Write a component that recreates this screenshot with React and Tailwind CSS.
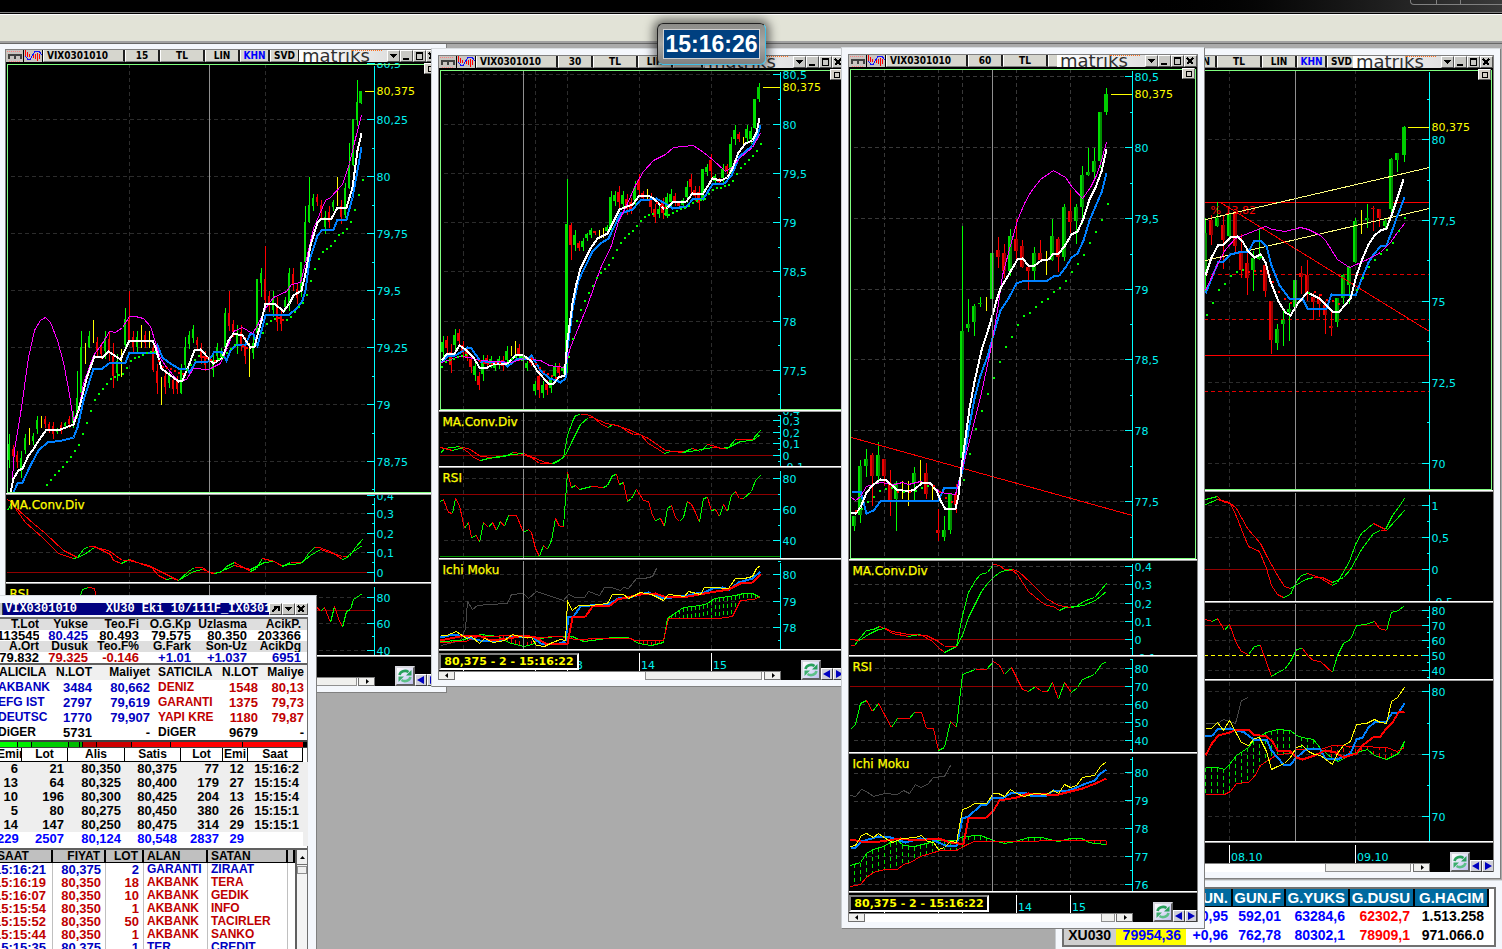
import React from 'react';

const CYAN = '#00f0f0';

const parse = (str) => str.trim().split(/\s+/).map((p) => p.split(',').map(Number));

// y value of a polyline at a given x
const valueAt = (pts, x) => {
  for (let i = 1; i < pts.length; i++) {
    const [x0, y0] = pts[i - 1];
    const [x1, y1] = pts[i];
    if (x >= x0 && x <= x1) return y0 + ((y1 - y0) * (x - x0)) / (x1 - x0 || 1);
  }
  return null;
};

const Line = ({ pts, color, w = 1, dash }) => (
  <polyline points={pts} fill="none" stroke={color} strokeWidth={w} strokeDasharray={dash} />
);

// rising parts are green, falling parts are red
const Trend = ({ pts }) => {
  const p = parse(pts);
  return p.slice(1).map(([x, y], i) => (
    <line key={i} x1={p[i][0]} y1={p[i][1]} x2={x} y2={y} stroke={y < p[i][1] ? '#00ff00' : '#ff0000'} />
  ));
};

const Cloud = ({ a, b, step, start }) => {
  const top = parse(a);
  const bottom = parse(b);
  const bars = [];
  for (let x = start; x <= top[top.length - 1][0]; x += step) {
    const ya = valueAt(top, x);
    const yb = valueAt(bottom, x);
    if (ya !== null && yb !== null) bars.push([x, ya, yb]);
  }
  return (
    <>
      {bars.map(([x, ya, yb]) => (
        <line key={x} x1={x} x2={x} y1={ya} y2={yb} stroke={ya < yb ? '#00e000' : '#ff0000'} strokeDasharray="4 3" />
      ))}
      <Line pts={a} color="#00ff00" />
      <Line pts={b} color="#ff0000" />
    </>
  );
};

// each candle: colour letter, x, high, low and, where known, body top and bottom
const Candles = ({ data, body = 2 }) =>
  data.trim().split(/\s+/).map((item, i) => {
    const kind = item[0];
    const [x, high, low, bt, bb] = item.slice(1).split(',').map(Number);
    const color = kind === 'r' ? '#ff0000' : kind === 'y' ? '#ffff00' : '#00ff00';
    const range = low - high;
    const t = bt === undefined ? high + Math.round(range * 0.3) : bt;
    const b = bb === undefined ? high + Math.round(range * 0.75) : bb;
    const height = Math.max(b - t, 1);
    return (
      <g key={i}>
        <line x1={x} x2={x} y1={high} y2={low} stroke={color} />
        {kind === 'G' && <rect x={x - 2.5} y={t - 0.5} width={Math.max(body, 3)} height={height} fill="#00cc00" />}
        {(kind === 'g' || kind === 'r') && (
          <>
            <rect x={x - (body > 2 ? 2.5 : 1.5)} y={t - 0.5} width={body} height={height} fill={kind === 'g' ? '#00e000' : '#ee0000'} />
            {body > 3 && <rect x={x - 0.5} y={t - 0.5} width={2} height={height} fill={kind === 'g' ? '#009000' : '#990000'} />}
          </>
        )}
      </g>
    );
  });

const Dots = ({ pts, color = '#00ff00' }) =>
  parse(pts).map(([x, y], i) => <rect key={i} x={x - 0.5} y={y - 1.5} width="2" height="2" fill={color} />);

const Pane = ({ win, y, h, title, grid = [], labels = [], ticks = [], last, frame, children }) => (
  <div className="relative border-b border-[#a0a0a0]">
    <svg
      width="100%"
      height={h}
      className="block bg-black border-b border-white box-content"
      shapeRendering="crispEdges"
      fontFamily='"DejaVu Sans", Verdana, sans-serif'
      fontSize="11"
    >
      <g transform={`translate(${0.5 - win.x} ${0.5 - y})`}>
        {grid.map((gy) => (
          <line key={gy} x1={win.x + 4} x2={win.axis} y1={gy} y2={gy} stroke={win.gridColor} strokeDasharray="4 3" />
        ))}
        {win.gridX.map((gx) => (
          <line key={gx} x1={gx} x2={gx} y1={y} y2={y + h} stroke={win.gridColor} strokeDasharray="4 3" />
        ))}
        {children}
        <line x1={win.cross} x2={win.cross} y1={y} y2={y + h} stroke="#909090" />
        <line x1={win.axis} x2={win.axis} y1={y + 2} y2={y + h} stroke="#00ffff" />
        {labels.map(([ly, text]) => (
          <g key={text}>
            <line x1={win.axis - 8} x2={win.axis} y1={ly} y2={ly} stroke="#00ffff" />
            <text x={win.axis + 2} y={ly + 4} fill={CYAN}>{text}</text>
          </g>
        ))}
        {ticks.map((ty) => (
          <line key={ty} x1={win.axis - 3} x2={win.axis} y1={ty} y2={ty} stroke="#00ffff" />
        ))}
        {last && (
          <>
            <line x1={last[0]} x2={win.axis - 1} y1={last[1]} y2={last[1]} stroke="#ffff00" />
            <text x={win.axis + 2} y={last[1] + 3} fill="#ffff00">80,375</text>
          </>
        )}
        {title && <text x={win.x + 3} y={y + 13} fill="#ffff00" stroke="#ffff00" strokeWidth="0.25" fontSize="12">{title}</text>}
      </g>
      {frame && <rect x="1.5" y="1.5" height={h - 2} className="w-[calc(100%-3px)]" fill="none" stroke="#80ff80" />}
    </svg>
    {frame && (
      <button aria-label="Maximize pane" className="absolute top-0 right-[2px] w-[13px] h-[11px] bg-[#d4d0c8] border border-t-white border-l-white border-r-[#606060] border-b-[#606060] flex items-center justify-center">
        <span className="block w-[6px] h-[6px] border border-black"></span>
      </button>
    )}
  </div>
);

const Cell = ({ children, className }) => (
  <button className={`shrink-0 h-[12px] bg-[#d6d6ce] border-l border-l-white border-r-2 border-r-[#202020] border-b border-b-[#808080] leading-[12px] whitespace-nowrap ${className}`}>
    {children}
  </button>
);

const MIcon = () => (
  <svg width="18" height="12" className="block shrink-0 bg-[#c8c4c0]" shapeRendering="crispEdges">
    <path d="M2.5 9V4.5H14.5V9M8.5 4.5V9" fill="none" stroke="#404040" strokeWidth="2" />
    <path d="M1 1.5H15M3 11.5H15" stroke="#ff8080" strokeDasharray="1 1" />
    <path d="M17.5 0V12" stroke="#000" />
  </svg>
);

const WaveIcon = () => (
  <svg width="19" height="12" className="block shrink-0 bg-[#c8c4c0]" shapeRendering="crispEdges">
    <path d="M1.5 0V6M3.5 2V7M5.5 4V7M9.5 5V8M11.5 4V9M13.5 3V11M15.5 4V9" stroke="#ff0000" />
    <path d="M1.5 6L3.5 9H6.5L10.5 2L13 1H15L17.5 5" fill="none" stroke="#1010ff" />
    <path d="M18.5 0V12" stroke="#000" />
  </svg>
);

const CapButton = ({ label, children }) => (
  <button aria-label={label} className="shrink-0 w-[13px] h-[12px] bg-[#c8c8c4] border border-t-white border-l-white border-r-[#505050] border-b-[#505050] flex items-center justify-center">
    <svg width="9" height="8" className="block" shapeRendering="crispEdges">{children}</svg>
  </button>
);

const TitleBar = ({ period }) => (
  <div className="flex h-[13px] border-b border-black bg-[#d6d6ce] font-bold text-[10px] text-black font-['DejaVu_Sans_Condensed','DejaVu_Sans',Tahoma,sans-serif]">
    <div className="flex flex-1 min-w-0 overflow-hidden">
      <MIcon />
      <WaveIcon />
      <Cell className="w-[82px] text-left pl-[3px]">VIX0301010</Cell>
      <Cell className="w-[35px]">{period}</Cell>
      <Cell className="w-[45px]">TL</Cell>
      <Cell className="w-[35px]">LIN</Cell>
      <Cell className="w-[30px] text-[#0000ff]">KHN</Cell>
      <Cell className="w-[30px]">SVD</Cell>
    </div>
    <div className="relative w-[88px] h-[12px] shrink-0 bg-gradient-to-r from-white to-[#e0e0e0] overflow-hidden pl-[3px]">
      <span className="block font-['DejaVu_Sans',sans-serif] font-normal text-[18px] leading-[11px] text-[#303030]">matriks</span>
      <span className="absolute top-0 left-[53px] w-[30px] border-t border-dotted border-[#ff7020]"></span>
    </div>
    <CapButton label="Menu"><path d="M1 2H8L4.5 6Z" fill="#000" /></CapButton>
    <CapButton label="Minimize"><path d="M1 7H7" stroke="#000" strokeWidth="2" /></CapButton>
    <CapButton label="Maximize"><path d="M1.5 1V7.5H7.5V1" fill="none" stroke="#000" /><path d="M1 1H8" stroke="#000" strokeWidth="2" /></CapButton>
    <CapButton label="Close"><path d="M1 1L7 7M7 1L1 7" stroke="#000" strokeWidth="1.5" /></CapButton>
  </div>
);

const RefreshIcon = () => (
  <svg width="16" height="16" viewBox="0 0 16 16" className="block">
    <path d="M2.5 7A5.6 5 0 0 1 11.5 4" fill="none" stroke="#27a05a" strokeWidth="2.6" />
    <path d="M14.5 2V7.5H9Z" fill="#27a05a" />
    <path d="M13.5 9A5.6 5 0 0 1 4.5 12" fill="none" stroke="#5cc088" strokeWidth="2.6" />
    <path d="M1.5 14V8.5H7Z" fill="#3bad6c" />
  </svg>
);

const arrowButton = 'w-[12px] h-[12px] bg-[#d0d0d8] border border-t-white border-l-white border-r-[#404040] border-b-[#404040] flex items-center justify-center';

const Footer = ({ win, marks, thumb }) => (
  <div className="flex h-[29px] bg-black">
    <div className="relative shrink-0 flex flex-col" style={{ width: win.axis - win.x + 1 }}>
      <svg width="100%" height="20" className="block" fontFamily='"DejaVu Sans", Verdana, sans-serif' fontSize="11" shapeRendering="crispEdges">
        {marks.map(([x, text]) => (
          <g key={x}>
            <line x1={x - win.x + 0.5} x2={x - win.x + 0.5} y1="2" y2="20" stroke="#fff" />
            <text x={x - win.x + 2} y="18" fill={CYAN}>{text}</text>
          </g>
        ))}
      </svg>
      <div className="h-[9px] flex bg-white border-t border-[#808080]">
        <button aria-label="Scroll left" className="w-[16px] bg-[#f0f0ee] border-r border-b border-[#707070] flex items-center justify-center">
          <svg width="4" height="5"><path d="M3 0V5L0 2.5Z" fill="#000" /></svg>
        </button>
        <div className="flex-1 flex">
          <div style={{ width: thumb[0] - win.x - 16 }}></div>
          <div className="bg-[#f0f0ee] border-r border-b border-l border-[#909090]" style={{ width: thumb[1] - thumb[0] }}></div>
        </div>
        <button aria-label="Scroll right" className="w-[17px] bg-[#f0f0ee] border border-t-0 border-[#707070] flex items-center justify-center">
          <svg width="4" height="5"><path d="M1 0V5L4 2.5Z" fill="#000" /></svg>
        </button>
      </div>
      <output className="absolute left-0 top-[2px] w-[140px] h-[17px] bg-black border-2 border-t-[#808080] border-l-[#808080] border-r-white border-b-white text-[#ffff00] font-bold text-[11px] leading-[13px] text-center whitespace-nowrap font-['DejaVu_Sans',Verdana,sans-serif]">
        80,375 - 2 - 15:16:22
      </output>
    </div>
    <div className="flex items-end ml-[20px] shrink-0">
      <button aria-label="Refresh" className="w-[20px] h-[20px] bg-gradient-to-br from-white to-[#c0c0ee] border-2 border-[#d8d8e0] border-r-[#606060] border-b-[#606060]">
        <RefreshIcon />
      </button>
      <button aria-label="Previous" className={arrowButton}>
        <svg width="8" height="8"><path d="M7 0V8L0 4Z" fill="#0000c0" /></svg>
      </button>
      <button aria-label="Next" className={arrowButton}>
        <svg width="8" height="8"><path d="M1 0V8L8 4Z" fill="#0000c0" /></svg>
      </button>
    </div>
  </div>
);

const Frame = ({ className, children }) => (
  <section className={`absolute p-[6px] bg-[#f4f7fc] border border-t-[#d8dce0] border-l-[#c8ccd0] border-r-[#808080] border-b-[#808080] ${className}`}>
    {children}
  </section>
);

const ChartWindow = ({ className, period, children }) => (
  <Frame className={className}>
    <div className="border border-b-0 border-[#808080] overflow-hidden">
      <TitleBar period={period} />
      {children}
    </div>
  </Frame>
);

const win15 = { x: 6, axis: 374, cross: 209, gridX: [129, 265], gridColor: '#2c2c2c' };
const win30 = { x: 439, axis: 780, cross: 523, gridX: [463, 535, 567, 639, 711], gridColor: '#2c2c2c' };
const win60 = { x: 849, axis: 1132, cross: 992, gridX: [884, 938, 962, 1016, 1070], gridColor: '#383838' };
const winDay = { x: 1063, axis: 1429, cross: 1295, gridX: [1229, 1355], gridColor: '#2c2c2c' };

const Chart15 = () => (
  <ChartWindow className="left-[-2px] top-[-2px] w-[449px]" period="15">
    <Pane win={win15} y={63} h={430} frame last={[364, 91]}
      grid={[119, 176, 233, 290, 347, 404, 461]}
      labels={[[63, '80,5'], [119, '80,25'], [176, '80'], [233, '79,75'], [290, '79,5'], [347, '79,25'], [404, '79'], [461, '78,75']]}
      ticks={[148, 205, 262, 319, 376, 433, 489]}>
      <Candles data="g9,433,467,444,460 r13,444,460 r17,450,467,455,462 g21,450,477 g25,433,453,438,450 y29,427,444 g33,432,444 g37,415,433 y41,415,427 r45,415,427 r49,421,432 r53,421,438 g57,427,433 r61,421,433 g65,421,428 r69,415,427 g73,410,427 g77,370,410,398,418 g81,330,398,347,393 y85,342,363 g89,330,347,336,347 y93,319,342 r97,336,357 r101,342,358 g105,330,358 r109,330,360 r113,342,387 g117,353,380 y121,348,376 g125,307,348,319,345 r129,290,342,320,340 r133,330,353 g137,330,352 y141,324,347 r145,330,347 y149,330,347 r153,342,371,348,370 r157,363,393,371,383 y161,376,404 r165,370,393,376,387 g169,370,387 r173,375,393 r177,375,393 g181,363,393,370,393 g185,336,367,347,365 g189,330,348 g193,324,342 r197,336,348 r201,342,363 r205,350,370 y209,357,380 g213,353,376 g217,342,360 g221,347,360 g225,307,348,313,347 r229,290,330,313,326 r233,319,336 g237,324,353 r241,324,350 r245,336,363 y249,342,376 g253,336,358 g257,279,336,279,333 g261,267,296,273,283 r265,245,302,279,300 r269,290,311 g273,290,316 r277,296,330 r281,307,330 g285,296,310 g289,267,310,273,305 r293,267,290 r297,283,303 g301,262,296,262,290 g305,205,262,222,262 g309,176,222,205,222 g313,193,210 r317,193,205 r321,199,218 g325,210,233 r329,205,227 g333,199,210 y337,176,205 r341,199,223 g345,182,217,188,215 g349,142,188,165,188 g353,119,165,119,165 g357,79,125,102,120 G361,91,103,91,103" />
      <Line w={2} color="#0080ff" pts="13,492 17,483 22,482 30,465 38,450 47,442 62,440 73,437 77,427 83,400 93,368 102,368 110,362 125,362 129,352 155,352 157,345 162,357 167,361 178,368 187,368 189,372 195,362 208,361 214,351 221,351 226,360 230,350 235,345 245,344 250,333 253,334 257,345 265,315 289,314 297,307 302,300 305,290 309,260 317,235 322,229 333,229 337,219 346,219 352,197 357,170 361,147" />
      <Line color="#ff00ff" pts="11,492 14,450 21,407 28,357 34,330 40,320 45,317 50,322 57,340 63,362 68,388 73,420 78,410 83,383 93,355 102,343 109,331 115,332 122,327 129,316 135,316 143,318 150,326 155,342 160,358 167,368 178,381 186,379 193,368 208,369 220,363 227,347 233,331 242,327 252,333 257,325 265,308 273,297 286,291 291,284 300,282 305,263 313,228 325,200 330,197 342,184 349,163 355,138 361,115" />
      <Line w={2} color="#fff" pts="10,492 13,478 18,470 22,468 28,455 32,450 37,442 46,429 60,429 73,424 78,410 87,375 94,356 102,357 108,351 120,359 129,340 152,340 155,347 161,368 178,381 182,380 187,368 194,350 200,349 213,363 222,357 228,340 233,333 242,335 250,347 254,346 261,320 265,303 274,303 283,311 289,303 293,295 301,290 305,273 310,245 317,222 321,218 331,218 337,207 346,207 352,187 357,150 361,133" />
      <Dots pts="46,485 50,480 54,475 58,471 62,467 66,462 70,457 74,451 78,445 82,434 86,423 90,411 94,400 98,394 102,389 106,384 110,379 114,377 118,375 122,374 126,368 130,361 134,358 138,357 142,355 146,353 150,352 154,352 186,370 190,365 194,360 198,356 218,359 222,357 226,353 230,349 234,345 262,333 266,324 270,321 274,319 286,320 290,317 294,312 298,307 302,303 306,295 310,281 314,269 318,259 322,252 326,249 330,246 334,241 338,235 342,233 346,229 350,222 354,210 358,195 362,180" />
      <Dots color="#ff0000" pts="158,361 162,367 166,368 170,369 174,371 178,373 182,374 202,357 206,358 210,360 214,361 242,346 246,348 278,318 282,320" />
    </Pane>
    <Pane win={win15} y={495} h={87} title="MA.Conv.Div" grid={[513, 533, 552]}
      labels={[[495, '0,4'], [513, '0,3'], [533, '0,2'], [552, '0,1'], [572, '0']]} ticks={[504, 523, 543, 562, 582]}>
      <line x1="6" x2="374" y1="572" y2="572" stroke="#900000" />
      <Trend pts="7,499 12,502 17,511 25,522 33,529 43,538 58,553 73,558 77,557 83,549 88,546 94,546 110,554 113,560 121,563 129,559 145,565 151,567 158,575 166,579 172,578 178,580 188,571 194,567 202,567 210,573 214,573 222,571 226,566 234,562 243,567 250,571 256,568 262,558 274,561 282,566 290,562 302,562 308,553 314,547 319,547 332,552 342,559 349,556 355,547 362,539" />
      <Trend pts="7,510 11,503 15,507 33,523 45,533 63,550 77,557 84,554 94,547 108,550 122,560 129,560 148,565 158,570 178,580 193,571 202,569 214,573 218,572 234,565 250,569 264,562 273,561 282,565 300,563 310,555 320,549 342,556 347,556 353,551 362,545" />
    </Pane>
    <Pane win={win15} y={584} h={71} title="RSI" grid={[597, 623, 650]} labels={[[597, '80'], [623, '60'], [650, '40']]} ticks={[610, 636]}>
      <line x1="6" x2="374" y1="610" y2="610" stroke="#900000" />
      <Trend pts="76,600 80,595 82,589 88,587 94,588 96,597 102,610 300,620 316,606 320,611 324,607 330,622 334,606 338,618 342,627 346,611 350,609 353,599 362,593" />
    </Pane>
    <Footer win={win15} marks={[[129, '06'], [265, '07']]} thumb={[300, 357]} />
  </ChartWindow>
);

const Chart30 = () => (
  <ChartWindow className="left-[431px] top-[4px] w-[422px]" period="30">
    <Pane win={win30} y={69} h={341} frame last={[762, 87]}
      grid={[74, 124, 173, 222, 271, 321, 370]}
      labels={[[74, '80,5'], [124, '80'], [173, '79,5'], [222, '79'], [271, '78,5'], [321, '78'], [370, '77,5']]}
      ticks={[99, 148, 197, 247, 296, 345, 394]}>
      <Candles data="g443,335,357 r447,335,352 r451,343,372 g455,328,350 r459,328,345 r463,340,357 r467,347,360 r471,353,372 g475,360,380 r479,371,389 g483,354,380 r487,354,367 g491,355,367 g495,360,370 g499,355,368 r503,355,370 g507,345,365 y511,345,355 y515,340,357 r519,343,360 g523,353,363 g527,360,370 r531,355,365 g535,380,394 r539,367,397 g543,380,397 r547,379,394 g551,375,392 g555,362,380 r559,362,377 g563,365,373 g567,178,372,224,360 r571,222,259,225,245 g575,229,250 r579,240,250 g583,237,250 g587,232,240 g591,227,237 r595,230,234 y599,229,238 y603,227,237 g607,224,233 g611,190,230,197,228 g615,190,205 r619,185,207 g623,190,208 r627,193,214 r631,197,213 g635,180,207 r639,173,195 r643,190,200 y647,188,200 r651,192,212 r655,203,222 g659,205,217 r663,197,218 g667,192,217,197,216 g671,188,207 r675,192,205 r679,200,208 g683,197,207 g687,180,202 r691,173,192 r695,185,200 r699,185,209 g703,168,200,169,198 g707,163,175 r711,153,177 g715,173,183 r719,177,183 g723,163,183 r727,163,173 g731,136,173,144,172 g735,124,144 r739,131,141 y743,136,147 g747,124,142 g751,126,143 g755,99,128,99,128 G759,82,101,87,99" body={3} />
      <Line w={2} color="#0080ff" pts="441,362 447,356 455,355 463,350 467,347 471,348 480,361 503,361 507,366 516,359 528,358 531,355 540,370 549,378 556,380 560,382 565,378 567,348 572,310 578,280 592,251 600,243 608,238 620,213 632,209 640,200 650,199 656,198 668,205 672,208 686,206 693,198 703,198 712,184 724,183 731,175 739,156 752,145 757,135 760,125" />
      <Line color="#ff00ff" pts="441,362 459,356 469,357 479,360 511,362 523,358 540,360 549,365 564,367 570,347 587,305 600,268 611,245 618,221 627,203 635,185 643,171 653,160 665,154 673,147 693,145 703,152 712,159 725,171 731,167 740,157 752,147 760,133" />
      <Line w={2} color="#fff" pts="441,360 447,353 454,353 459,345 465,349 473,357 479,367 487,367 492,364 507,363 516,354 522,354 531,361 537,371 548,383 553,383 558,377 564,375 567,340 572,303 576,283 580,268 588,252 590,248 597,238 607,233 612,223 619,209 632,204 639,195 648,195 653,198 663,208 667,207 672,202 686,201 692,193 702,194 712,178 720,180 727,177 732,168 738,152 745,143 752,140 756,132 759,118" />
      <Dots pts="441,367 445,362 449,360 453,359 457,357 461,356 465,355 507,361 511,359 515,357 519,357 523,358 568,357 572,339 576,321 580,310 584,301 588,293 592,286 596,278 600,273 604,269 608,265 612,258 616,250 620,243 624,238 628,234 632,231 636,226 640,221 644,217 648,215 652,214 664,214 668,215 672,213 676,211 680,209 684,208 688,206 692,203 696,201 700,200 704,199 708,194 712,190 716,188 720,188 724,186 728,185 732,181 736,174 740,168 744,164 748,160 752,156 756,151 760,144" />
      <Dots color="#ff0000" pts="479,361 483,363 487,364 491,364 495,363 499,363 531,359 535,364 539,368 543,372 547,374 551,376 555,378 656,203 660,206 664,208" />
    </Pane>
    <Pane win={win30} y={412} h={54} title="MA.Conv.Div" grid={[420, 432, 443]}
      labels={[[410, '0,4'], [420, '0,3'], [432, '0,2'], [443, '0,1'], [455, '0'], [466, '-0,1']]} ticks={[415, 426, 438, 449, 461]}>
      <line x1="439" x2="780" y1="455" y2="455" stroke="#900000" />
      <Trend pts="440,453 444,448 452,447 459,446 468,452 473,457 480,460 488,458 504,456 513,452 519,453 531,457 539,463 552,463 558,460 563,457 567,435 572,421 575,415 580,414 586,414 592,416 601,424 608,427 612,424 620,426 627,431 633,434 640,434 648,443 658,449 664,453 670,451 684,451 692,448 700,451 707,444 712,445 720,448 728,447 735,439 752,439 760,430" />
      <Trend pts="440,447 452,450 463,447 470,449 480,456 492,457 513,454 523,453 545,462 552,463 556,462 565,455 572,440 580,424 588,417 592,417 606,423 616,425 628,429 648,438 665,450 682,452 696,450 712,447 726,448 740,441 752,440 760,434" />
    </Pane>
    <Pane win={win30} y={468} h={90} title="RSI" grid={[478, 509, 540]} labels={[[478, '80'], [509, '60'], [540, '40']]} ticks={[494, 525]}>
      <line x1="439" x2="780" y1="494" y2="494" stroke="#900000" />
      <line x1="439" x2="780" y1="556" y2="556" stroke="#009000" />
      <Trend pts="440,501 443,499 448,512 452,513 455,498 459,505 464,528 468,522 471,537 476,535 479,542 483,522 488,527 492,522 496,530 500,521 504,526 508,515 516,515 523,532 528,529 531,532 535,548 539,556 543,545 547,549 551,540 555,518 559,526 563,526 567,472 571,487 575,485 579,489 591,486 603,487 607,485 612,475 616,474 619,484 623,482 627,501 631,498 636,489 643,500 648,501 652,515 655,520 660,518 664,526 667,508 671,505 675,517 679,521 683,517 687,501 691,504 695,512 699,522 703,498 707,497 711,510 715,509 719,516 723,504 727,511 731,495 735,491 739,498 743,498 751,491 755,480 760,475" />
    </Pane>
    <Pane win={win30} y={560} h={89} title="Ichi Moku" grid={[574, 601, 627]} labels={[[574, '80'], [601, '79'], [627, '78']]} ticks={[561, 588, 614, 640]}>
      <Line color="#484848" pts="441,645 448,643 460,640 465,628 467,601 472,609 477,605 488,604 507,603 511,594 523,593 528,598 536,591 548,595 563,600 568,594 575,597 584,597 588,591 599,595 604,587 611,587 620,590 623,587 628,588 636,578 644,578 652,576 656,568" />
      <Cloud step={4} start={443}
        a="440,641 460,640 470,637 480,634 498,636 508,642 523,646 532,644 540,638 555,636 572,636 583,641 600,639 612,637 628,637 638,643 651,645 663,642 667,618 683,607 700,605 707,603 714,598 735,595 743,593 752,593 760,597"
        b="440,642 465,641 478,636 520,635 535,637 560,636 575,639 600,638 630,638 634,640 663,640 668,618 718,618 732,616 740,600 753,599 760,596" />
      <Line w={2} color="#0080ff" pts="440,637 452,634 464,636 483,641 500,640 511,636 531,636 540,643 555,644 565,641 568,616 573,616 580,606 590,605 607,604 618,598 628,597 648,592 663,598 688,595 696,593 704,592 712,588 722,587 729,589 738,582 752,578 760,571" />
      <Line w={2} color="#ff0000" pts="440,640 464,635 478,635 490,640 508,638 523,635 535,637 545,643 567,643 572,617 585,616 592,606 610,605 617,599 640,594 655,593 666,597 688,596 704,593 728,589 740,583 752,582 760,574" />
      <Line color="#ffff00" pts="440,635 446,635 456,631 466,638 471,636 479,643 484,638 493,642 504,640 512,634 523,637 531,637 536,645 544,646 552,642 560,639 565,640 567,601 572,610 578,605 590,605 607,603 612,594 623,594 628,598 640,592 651,594 663,600 668,594 684,596 688,591 700,594 704,587 712,587 728,588 735,578 744,578 752,576 756,568 760,565" />
    </Pane>
    <Footer win={win30} marks={[[463, ''], [535, ''], [567, '13'], [639, '14'], [711, '15']]} thumb={[645, 762]} />
  </ChartWindow>
);

const Chart60 = () => (
  <ChartWindow className="left-[841px] top-[3px] w-[364px]" period="60">
    <Pane win={win60} y={68} h={491} frame last={[1110, 94]}
      grid={[76, 147, 218, 289, 359, 430, 501]}
      labels={[[76, '80,5'], [147, '80'], [218, '79,5'], [289, '79'], [359, '78,5'], [430, '78'], [501, '77,5']]}
      ticks={[112, 183, 254, 324, 395, 466, 537]}>
      <Candles body={4} data="g854,515,530,516,526 g860,459,522,466,515 g866,448,476,459,466 r872,452,505,455,476 g878,441,483,455,476 r884,459,485,459,476 r890,469,515,483,502 g896,480,530,483,499 y902,480,498 y908,480,505 g914,466,500,473,483 y920,459,483 r926,462,498,473,494 y932,483,499 r938,508,540,530,533 g944,515,540,530,537 g950,492,533,494,530 r956,483,512,495,505 g962,225,458,331,458 g968,298,331,324,328 g974,303,335,306,322 g980,296,306,303,304 y986,296,310 g992,253,299,253,299 r998,236,267,250,257 r1004,243,277,253,271 g1010,228,275,236,271 r1016,218,258,239,251 r1022,239,267,246,267 r1028,267,289,267,271 g1034,246,280,253,271 r1040,239,260,253,260 y1046,250,274 g1052,218,260,236,260 r1058,236,271,239,257 g1064,203,260,207,257 r1070,189,232,211,222 g1076,203,243,207,221 g1082,165,223,175,207 g1088,147,175,172,175 g1094,147,179,161,172 g1100,112,167,112,161 G1106,87,114,94,112" />
      <line x1="851" y1="437" x2="1132" y2="515" stroke="#ff0000" />
      <Line w={2} color="#0080ff" pts="851,491 860,491 866,513 873,510 880,501 886,500 938,500 944,487 957,487 962,470 968,430 974,398 980,375 987,356 995,327 1000,310 1008,298 1016,283 1024,280 1047,280 1053,276 1059,275 1065,267 1071,257 1077,253 1083,240 1089,220 1101,192 1106,173" />
      <Line color="#ff00ff" pts="851,497 855,500 860,496 866,486 880,482 894,484 902,482 908,484 920,481 930,484 940,492 955,494 960,475 968,445 980,397 990,350 997,310 1002,275 1010,245 1017,220 1024,203 1030,192 1040,179 1053,170 1065,177 1072,187 1082,198 1090,187 1096,175 1101,160 1106,142" />
      <Line w={2} color="#fff" pts="851,512 855,513 860,507 866,492 872,485 880,479 886,480 896,489 908,491 914,489 922,482 929,482 936,490 940,500 945,509 955,508 958,495 961,467 966,430 969,408 974,381 981,350 989,325 993,311 996,300 1000,288 1010,271 1017,259 1022,258 1028,265 1034,265 1041,260 1048,259 1053,253 1058,253 1064,246 1071,234 1077,231 1083,218 1089,199 1095,187 1101,171 1106,149" />
      <Dots pts="861,509 867,502 873,497 879,491 885,489 891,488 903,492 915,491 921,488 927,486 963,480 969,454 975,429 981,411 987,394 993,378 999,362 1005,347 1011,337 1017,325 1023,316 1029,313 1035,307 1041,302 1047,299 1053,292 1059,288 1065,281 1071,272 1077,264 1083,255 1089,243 1095,232 1101,220 1107,204" />
      <Dots color="#ff0000" pts="855,511 897,492 909,492 933,486 939,492 945,498 951,502" />
    </Pane>
    <Pane win={win60} y={561} h={94} title="MA.Conv.Div" grid={[566, 584, 603, 621]}
      labels={[[566, '0,4'], [584, '0,3'], [603, '0,2'], [621, '0,1'], [639, '0'], [657, '-0,1']]} ticks={[575, 594, 612, 630, 648]}>
      <line x1="849" x2="1132" y1="639" y2="639" stroke="#900000" />
      <Trend pts="850,645 854,645 860,637 866,630 873,629 879,626 886,629 892,633 908,636 920,634 932,641 938,647 944,652 950,649 956,646 962,615 968,592 975,580 980,574 987,572 993,564 999,565 1004,569 1012,570 1017,574 1022,582 1028,591 1034,596 1040,601 1046,605 1053,606 1059,610 1065,607 1076,606 1083,601 1094,597 1100,590 1106,583" />
      <Trend pts="850,639 859,640 868,634 878,629 885,628 892,631 908,634 926,635 938,641 944,646 956,646 962,635 968,617 975,603 981,591 987,583 993,577 999,572 1005,570 1012,569 1018,571 1030,582 1046,598 1058,605 1071,607 1083,605 1095,600 1106,591" />
    </Pane>
    <Pane win={win60} y={657} h={95} title="RSI" grid={[668, 704, 722, 740]}
      labels={[[668, '80'], [686, '70'], [704, '60'], [722, '50'], [740, '40']]} ticks={[659, 677, 695, 713, 731, 749]}>
      <line x1="849" x2="1132" y1="686" y2="686" stroke="#900000" />
      <Trend pts="850,729 855,724 860,703 866,700 872,711 878,703 884,714 891,727 897,718 909,718 914,712 921,712 926,728 933,728 938,750 944,747 950,721 956,727 962,674 975,669 986,669 993,661 999,665 1004,674 1011,667 1016,677 1022,689 1028,691 1035,686 1041,691 1047,691 1052,682 1058,699 1064,682 1071,692 1077,687 1082,679 1094,674 1101,664 1106,661" />
    </Pane>
    <Pane win={win60} y={754} h={137} title="Ichi Moku" grid={[773, 801, 828, 856, 884]}
      labels={[[772, '80'], [800, '79'], [828, '78'], [856, '77'], [884, '76']]} ticks={[759, 786, 814, 842, 870]}>
      <Line color="#484848" pts="850,795 855,796 861,789 866,791 873,796 884,793 897,794 903,790 909,793 915,784 920,787 927,784 933,777 944,776 950,765" />
      <Cloud step={6} start={854}
        a="850,865 860,862 866,853 873,849 883,846 890,842 897,840 903,845 914,846 922,844 938,840 956,840 962,836 980,835 993,840 1004,843 1015,841 1028,837 1041,837 1058,841 1070,838 1082,838 1088,842 1095,843 1106,844"
        b="850,886 860,884 866,877 873,872 884,869 897,869 903,864 910,862 920,856 930,853 940,850 956,850 965,845 974,841 1106,840" />
      <Line w={2} color="#0080ff" pts="850,847 855,847 861,841 878,836 890,837 905,842 920,838 932,839 938,842 945,845 956,845 962,818 968,816 980,805 986,804 992,797 1003,797 1012,792 1025,792 1030,795 1046,795 1053,790 1065,791 1076,787 1083,784 1094,780 1100,773 1106,769" />
      <Line w={2} color="#ff0000" pts="850,839 866,842 880,841 900,838 915,840 938,838 950,842 958,843 963,843 968,818 986,817 993,810 999,800 1016,797 1028,793 1046,794 1058,794 1082,788 1095,783 1106,778" />
      <Line color="#ffff00" pts="850,846 855,845 861,835 866,833 873,837 878,833 885,838 892,842 902,838 915,837 921,835 927,841 933,842 938,849 944,847 950,841 956,842 962,809 968,807 974,803 986,803 993,793 998,793 1004,796 1010,789 1016,793 1024,796 1034,793 1046,794 1053,790 1058,793 1064,784 1070,787 1076,785 1082,777 1094,775 1100,766 1106,761" />
    </Pane>
    <Footer win={win60} marks={[[884, ''], [938, ''], [962, '13'], [1016, '14'], [1070, '15']]} thumb={[1101, 1115]} />
  </ChartWindow>
);

const ChartDay = () => (
  <ChartWindow className="left-[1055px] top-[4px] w-[446px]" period="GUN">
    <Pane win={winDay} y={69} h={421} frame last={[1407, 127]}
      grid={[139, 220, 301, 382, 463]}
      labels={[[139, '80'], [220, '77,5'], [301, '75'], [382, '72,5'], [463, '70']]}
      ticks={[99, 180, 260, 341, 422]}>
      <line x1="1063" x2="1429" y1="202" y2="202" stroke="#ff0000" />
      <line x1="1063" x2="1429" y1="355" y2="355" stroke="#ff0000" />
      {[274, 319, 391].map((y) => (
        <line key={y} x1="1063" x2="1429" y1={y} y2={y} stroke="#e00000" strokeDasharray="4 3" />
      ))}
      <Candles body={4} data="g1205,217,290,233,270 r1211,214,244,220,235 g1217,201,226,218,226 r1223,215,268,225,240 g1229,213,237,213,236 r1235,213,251,213,246 r1241,233,277,251,270 r1247,251,294,263,278 g1253,250,290,258,270 g1259,228,259,256,259 r1265,263,296,265,291 r1271,301,353,301,340 g1277,323,349,329,343 g1283,310,345,320,324 g1289,302,340,309,312 g1295,280,307,280,307 r1301,265,293,273,277 r1307,259,300,275,293 r1313,292,319,297,302 r1319,293,316,298,304 r1325,300,333,305,315 r1331,308,335,326,328 g1337,297,326,298,322 g1343,273,303,275,298 g1349,265,303,267,285 g1355,217,262,221,262 y1361,209,233 g1367,203,227,218,220 r1373,205,230,208,209 r1379,209,226,209,218 g1385,218,227,221,226 g1391,157,211,159,209 g1397,152,171,153,160 G1404,125,161,127,155" />
      <text x="1210" y="213" fill="#ff0000">% 13,82</text>
      <line x1="1205" y1="219" x2="1429" y2="167" stroke="#ffff80" />
      <line x1="1205" y1="260" x2="1429" y2="208" stroke="#ffff80" />
      <line x1="1220" y1="202" x2="1429" y2="331" stroke="#ff0000" />
      <Line w={2} color="#0080ff" pts="1205,293 1211,278 1218,261 1223,261 1230,254 1238,252 1248,251 1254,240 1260,240 1266,246 1271,265 1279,285 1289,298 1302,298 1307,308 1326,308 1331,294 1355,295 1361,279 1368,262 1373,254 1380,246 1386,245 1391,232 1397,215 1404,197" />
      <Line color="#ff00ff" pts="1205,290 1217,264 1225,249 1235,238 1250,232 1265,226 1272,229 1285,231 1300,227 1308,229 1320,235 1325,240 1337,259 1349,267 1365,260 1380,252 1390,242 1397,232 1404,223" />
      <Line w={2} color="#fff" pts="1205,275 1211,257 1218,244 1223,244 1230,237 1237,236 1242,241 1248,251 1254,257 1260,254 1265,262 1270,281 1278,301 1285,312 1290,315 1298,302 1307,292 1319,298 1332,311 1339,311 1350,298 1356,275 1362,258 1368,244 1374,235 1380,230 1386,228 1391,215 1396,200 1403,179" />
      <Dots pts="1206,315 1212,303 1218,290 1224,284 1230,276 1236,272 1242,270 1260,257 1308,293 1356,290 1362,278 1368,267 1374,260 1380,254 1386,250 1392,243 1398,231 1404,218" />
      <Dots color="#ff0000" pts="1248,272 1254,271 1260,271 1272,282 1278,292 1284,299 1290,303 1314,292 1320,295 1326,300 1332,301 1338,304" />
    </Pane>
    <Pane win={winDay} y={492} h={109} grid={[505, 537]} labels={[[505, '1'], [537, '0,5'], [569, '0'], [601, '-0,5']]} ticks={[521, 553, 585]}>
      <line x1="1063" x2="1429" y1="569" y2="569" stroke="#900000" />
      <Trend pts="1205,499 1217,496 1222,501 1230,503 1236,516 1243,534 1248,546 1259,551 1266,568 1271,585 1277,594 1283,597 1290,594 1296,581 1301,575 1307,573 1319,577 1332,585 1337,582 1349,561 1355,544 1361,533 1373,523 1385,529 1392,515 1398,507 1404,498" />
      <Trend pts="1205,504 1217,499 1229,502 1236,508 1247,528 1260,543 1266,555 1277,575 1284,586 1290,588 1305,579 1313,577 1322,577 1332,582 1343,577 1350,569 1361,549 1373,533 1380,530 1386,530 1404,510" />
    </Pane>
    <Pane win={winDay} y={603} h={76} grid={[610, 640, 670]}
      labels={[[610, '80'], [625, '70'], [640, '60'], [655, '50'], [670, '40']]} ticks={[617, 632, 647, 662, 677]}>
      <line x1="1063" x2="1429" y1="625" y2="625" stroke="#900000" />
      <line x1="1063" x2="1421" y1="655" y2="655" stroke="#ffff00" strokeDasharray="4 3" />
      <Trend pts="1205,619 1212,621 1217,618 1224,630 1229,624 1236,643 1241,651 1248,654 1254,646 1260,645 1266,662 1271,676 1279,671 1284,669 1290,661 1296,649 1302,648 1308,656 1313,660 1320,661 1332,672 1337,655 1343,643 1350,639 1356,625 1365,624 1374,621 1379,628 1386,630 1391,612 1398,610 1404,605" />
    </Pane>
    <Pane win={winDay} y={681} h={160} grid={[691, 754, 816]} labels={[[691, '80'], [754, '75'], [816, '70']]} ticks={[723, 785]}>
      <Line color="#484848" pts="1205,723 1217,723 1223,719 1235,723 1241,700 1248,697" />
      <Cloud step={6} start={1205}
        a="1205,767 1217,767 1224,769 1229,764 1236,755 1242,751 1248,747 1254,739 1266,732 1277,729 1290,730 1296,735 1302,737 1313,739 1320,748 1332,758 1338,761 1350,754 1367,749 1374,755 1386,759 1398,753 1404,741"
        b="1205,794 1224,794 1230,791 1236,783 1248,782 1254,776 1260,765 1266,761 1277,754 1290,753 1296,749 1320,749 1332,745 1386,747 1397,751 1404,747" />
      <Line w={2} color="#0080ff" pts="1205,736 1212,735 1217,729 1230,728 1237,730 1244,732 1253,739 1266,739 1271,750 1283,764 1290,764 1296,757 1307,748 1319,748 1325,758 1337,759 1350,753 1356,739 1362,737 1368,727 1374,722 1386,721 1392,712 1398,712 1404,703" />
      <Line w={2} color="#ff0000" pts="1205,755 1212,742 1218,735 1229,732 1236,729 1248,729 1253,734 1266,736 1272,741 1277,750 1289,750 1296,757 1302,759 1314,755 1325,750 1335,752 1343,757 1356,753 1362,745 1374,736 1380,736 1386,728 1392,722 1398,712 1404,711" />
      <Line color="#ffff00" pts="1205,728 1211,728 1217,722 1223,730 1229,720 1236,733 1241,742 1248,745 1254,738 1259,737 1266,751 1271,769 1277,766 1284,763 1290,757 1296,747 1302,745 1308,751 1314,754 1320,755 1332,764 1337,753 1343,745 1350,741 1356,724 1366,723 1374,719 1380,722 1386,723 1391,701 1397,697 1404,687" />
    </Pane>
    <Footer win={winDay} marks={[[1229, '08.10'], [1355, '09.10']]} thumb={[1325, 1411]} />
  </ChartWindow>
);

const BLUE = 'text-[#0000c0]';
const RED = 'text-[#c00000]';

const summary = [
  { head: true, cells: ['T.Lot', 'Yukse', 'Teo.Fi', 'O.G.Kp', 'Uzlasma', 'AcikP.'] },
  { cells: ['113545', '80.425', '80.493', '79.575', '80.350', '203366'], colors: ['', BLUE, '', '', '', ''] },
  { head: true, cells: ['A.Ort', 'Dusuk', 'Teo.F%', 'G.Fark', 'Son-Uz', 'AcikDg'] },
  { cells: ['79.832', '79.325', '-0.146', '+1.01', '+1.037', '6951'], colors: ['', RED, RED, BLUE, BLUE, BLUE] },
];

const brokers = [
  ['AKBANK', '3484', '80,662', 'DENIZ', '1548', '80,13'],
  ['EFG IST', '2797', '79,619', 'GARANTI', '1375', '79,73'],
  ['DEUTSC', '1770', '79,907', 'YAPI KRE', '1180', '79,87'],
  ['DiGER', '5731', '-', 'DiGER', '9679', '-'],
];

const depth = [
  ['6', '21', '80,350', '80,375', '77', '12', '15:16:2'],
  ['13', '64', '80,325', '80,400', '179', '27', '15:15:4'],
  ['10', '196', '80,300', '80,425', '204', '13', '15:15:4'],
  ['5', '80', '80,275', '80,450', '380', '26', '15:15:1'],
  ['14', '147', '80,250', '80,475', '314', '29', '15:15:1'],
  ['229', '2507', '80,124', '80,548', '2837', '29', ''],
];

const trades = [
  ['15:16:21', '80,375', '2', 'GARANTI', 'ZIRAAT', BLUE],
  ['15:16:19', '80,350', '18', 'AKBANK', 'TERA', RED],
  ['15:16:07', '80,350', '10', 'AKBANK', 'GEDIK', RED],
  ['15:15:54', '80,350', '1', 'AKBANK', 'INFO', RED],
  ['15:15:52', '80,350', '50', 'AKBANK', 'TACIRLER', RED],
  ['15:15:44', '80,350', '1', 'AKBANK', 'SANKO', RED],
  ['15:15:35', '80,375', '1', 'TER', 'CREDIT', BLUE],
];

const pressure = [
  [20, '#00ff00'], [13, '#00ee00'], [36, '#00cc00'], [10, '#00bb00'], [2, '#00aa00'],
  [13, '#bb0000'], [34, '#cc0000'], [38, '#ee0000'], [71, '#ff0000'], [60, '#ff0000'],
];

const Cols = ({ widths }) => (
  <colgroup>
    {widths.map((w, i) => <col key={i} style={{ width: w }} />)}
  </colgroup>
);

const OrderWindow = () => (
  <Frame className="left-[-10px] top-[551px] w-[327px] h-[400px]">
    <div className="pt-[1px] pr-[2px] font-bold text-[12px] text-black font-['Liberation_Sans',Arial,sans-serif]">
      <div className="flex h-[12px] bg-[#000080]">
        <span className="w-[6px] shrink-0 bg-[#c8c8c4] border-r border-[#404040]"></span>
        <span className="flex-1 min-w-0 overflow-hidden whitespace-pre pl-[2px] text-white text-[12px] leading-[12px] font-['Liberation_Mono',monospace]">
          {'VIX0301010    XU30 Eki 10/111F_IX03010'}
        </span>
        <CapButton label="Detach"><path d="M1 7L6 2M3 1.5H7.5V6" fill="none" stroke="#000" strokeWidth="2" /></CapButton>
        <CapButton label="Menu"><path d="M1 2H8L4.5 6Z" fill="#000" /></CapButton>
        <CapButton label="Close"><path d="M1 1L7 7M7 1L1 7" stroke="#000" strokeWidth="1.5" /></CapButton>
      </div>
      <div className="mt-[2px] border-t-2 border-r border-[#707070] bg-white">
        <table className="table-fixed w-full text-right whitespace-nowrap overflow-hidden">
          <Cols widths={[42, 49, 51, 52, 56, 54, 6]} />
          <tbody>
            {summary.map((row, i) => (
              <tr key={i} className={row.head ? 'bg-[#dedede]' : 'text-[13px]'}>
                {row.cells.map((c, j) => (
                  row.head
                    ? <th key={j} scope="col" className="p-0 leading-[11px] overflow-hidden">{c}</th>
                    : <td key={j} className={`p-0 leading-[11px] overflow-hidden ${row.colors[j]}`}>{c}</td>
                ))}
                <td></td>
              </tr>
            ))}
          </tbody>
        </table>
        <table className="table-fixed w-full text-right leading-[15px] whitespace-nowrap border-t-2 border-[#606060]">
          <Cols widths={[59, 36, 58, 66, 42, 46, 3]} />
          <thead>
            <tr className="bg-[#f0f0f0]">
              <th className="p-0 pl-[2px] text-left">ALICILA</th>
              <th className="p-0">N.LOT</th>
              <th className="p-0">Maliyet</th>
              <th className="p-0 pl-[8px] text-left">SATICILA</th>
              <th className="p-0">N.LOT</th>
              <th className="p-0">Maliye</th>
              <th className="p-0"></th>
            </tr>
          </thead>
          <tbody>
            {brokers.map((b, i) => {
              const buy = i < 3 ? BLUE : '';
              const sell = i < 3 ? RED : '';
              return (
                <tr key={i}>
                  <td className={`p-0 pl-[1px] text-left overflow-hidden ${buy}`}>{b[0]}</td>
                  <td className={`p-0 text-[13px] ${buy}`}>{b[1]}</td>
                  <td className={`p-0 text-[13px] ${buy}`}>{b[2]}</td>
                  <td className={`p-0 pl-[8px] text-left ${sell}`}>{b[3]}</td>
                  <td className={`p-0 text-[13px] ${sell}`}>{b[4]}</td>
                  <td className={`p-0 text-[13px] ${sell}`}>{b[5]}</td>
                  <td></td>
                </tr>
              );
            })}
          </tbody>
        </table>
        <div className="flex gap-[1px] h-[8px] border-t-2 border-b border-[#404040] bg-black">
          {pressure.map(([w, c], i) => <span key={i} style={{ width: w, background: c }}></span>)}
        </div>
        <table className="table-fixed w-full text-right leading-[13px] whitespace-nowrap border-separate border-spacing-0">
          <Cols widths={[25, 46, 57, 56, 42, 25, 55, 5]} />
          <thead>
            <tr>
              {['Emir', 'Lot', 'Alis', 'Satis', 'Lot', 'Emi', 'Saat'].map((h, i) => (
                <th key={i} className="p-0 text-center border-r border-b border-black overflow-hidden">{h}</th>
              ))}
              <th className="p-0"></th>
            </tr>
          </thead>
          <tbody>
            {depth.map((d, i) => (
              <tr key={i} className={i === 5 ? 'bg-white text-[#0000ff]' : 'bg-[#eeeeee]'}>
                {d.map((v, j) => (
                  <td key={j} className="p-0 pr-[4px] leading-[14px] text-[13px]">{v}</td>
                ))}
                <td className="bg-[#eeeeee]"></td>
              </tr>
            ))}
          </tbody>
        </table>
        <div className="flex mt-[2px] border-t-2 border-[#606060]">
          <table className="table-fixed w-[298px] text-right leading-[13px] whitespace-nowrap border-separate border-spacing-0">
            <Cols widths={[56, 53, 38, 64, 80, 7]} />
            <thead>
              <tr className="bg-[#c0c0c0] leading-[12px]">
                <th className="p-0 text-left border-r-2 border-b border-black">SAAT</th>
                <th className="p-0 pr-[4px] border-r-2 border-b border-black">FIYAT</th>
                <th className="p-0 pr-[4px] border-r-2 border-b border-black">LOT</th>
                <th className="p-0 pl-[3px] text-left border-r-2 border-b border-black">ALAN</th>
                <th className="p-0 pl-[3px] text-left border-r-2 border-b border-black">SATAN</th>
                <th className="p-0 border-r-2 border-b border-black"></th>
              </tr>
            </thead>
            <tbody>
              {trades.map((t) => (
                <tr key={t[0]} className={t[5]}>
                  <td className="p-0 pr-[6px] text-[13px] border-r border-[#c0c0c0]">
                    <span className="flex justify-end">{t[0]}</span>
                  </td>
                  <td className="p-0 pr-[4px] text-[13px] border-r border-[#c0c0c0]">{t[1]}</td>
                  <td className="p-0 pr-[4px] text-[13px] border-r border-[#c0c0c0]">{t[2]}</td>
                  <td className="p-0 pl-[3px] text-left border-r border-[#c0c0c0]">{t[3]}</td>
                  <td className="p-0 pl-[3px] text-left border-r border-[#c0c0c0]">{t[4]}</td>
                  <td></td>
                </tr>
              ))}
            </tbody>
          </table>
          <div className="flex-1 border-l-2 border-[#606060] bg-[#f4f4f4]">
            <button aria-label="Scroll up" className="w-full h-[15px] bg-[#f0f0f0] border-b border-[#707070] flex items-center justify-center">
              <svg width="5" height="3"><path d="M0 3H5L2.5 0Z" fill="#000" /></svg>
            </button>
            <div className="h-[8px] mt-[1px] bg-[#f0f0f0] border border-[#909090]"></div>
          </div>
        </div>
      </div>
    </div>
  </Frame>
);

const indices = [
  ['XU100', '66129,41', '+0,95', '592,01', '63284,6', '62302,7', '1.513.258'],
  ['XU030', '79954,36', '+0,96', '762,78', '80302,1', '78909,1', '971.066.0'],
];

const indexColors = ['bg-[#cfcfcf]', 'bg-[#ffff00] text-[#0000ff]', 'text-[#0000ff]', 'text-[#0000ff]', 'text-[#0000ff]', 'text-[#ff0000]', ''];

const IndexWindow = () => (
  <Frame className="left-[1055px] top-[836px] w-[448px]">
    <div className="border-2 border-[#707070] bg-white font-bold text-[14px] text-black font-['Liberation_Sans',Arial,sans-serif]">
      <table className="table-fixed w-[425px] text-right whitespace-nowrap border-separate border-spacing-0">
        <Cols widths={[52, 70, 47, 53, 64, 65, 74]} />
        <thead>
          <tr className="bg-[#006aa0] text-white text-[15px]">
            {['', 'SON', 'GUN.', 'GUN.F', 'G.YUKS', 'G.DUSU', 'G.HACIM'].map((h) => (
              <th key={h} className="p-0 pr-[3px] leading-[17px] overflow-hidden border-r-2 border-b border-black">{h}</th>
            ))}
          </tr>
        </thead>
        <tbody>
          {indices.map((row) => (
            <tr key={row[0]}>
              {row.map((v, i) => (
                <td key={i} className={`p-0 pr-[5px] leading-[19px] ${indexColors[i]}`}>{v}</td>
              ))}
            </tr>
          ))}
        </tbody>
      </table>
    </div>
  </Frame>
);

const Clock = () => (
  <div className="absolute left-[657px] top-[23px] w-[109px] h-[42px] rounded-md p-[5px] bg-gradient-to-b from-[#8c8c88] via-[#a8a8a4] to-[#808080] border border-[#202020] border-b-[#40c0e8] border-r-[#40c0e8] shadow-[0_0_10px_4px_rgba(0,0,0,0.5)]">
    <time className="flex items-center justify-center h-full whitespace-nowrap bg-[#004080] border border-[#d0d0d0] text-white font-bold text-[23px] leading-none font-['Liberation_Sans',Arial,sans-serif]">
      15:16:26
    </time>
  </div>
);

const App = () => {
  return (
    <main className="relative w-full h-screen flex flex-col overflow-hidden bg-[#ababab]">
      <header className="shrink-0">
        <div className="h-[12px] bg-gradient-to-r from-black via-black via-75% to-[#3a3a3a] flex justify-end">
          <div className="flex w-[92px] h-[5px]">
            <span className="w-[27px] border border-t-0 border-[#808080] rounded-bl"></span>
            <span className="w-[24px] border-b border-r border-[#808080]"></span>
            <span className="flex-1 border-b border-[#808080]"></span>
          </div>
        </div>
        <div className="h-[2px] bg-black border-t border-[#808080]"></div>
        <div className="h-[27px] bg-[#e2e3d7] border-t border-white"></div>
        <div className="h-[3px] bg-[#a0a0a0] border-b border-[#686868]"></div>
      </header>
      <div className="relative flex-1 overflow-hidden">
        <Chart15 />
        <Chart30 />
        <ChartDay />
        <IndexWindow />
        <Chart60 />
        <OrderWindow />
      </div>
      <Clock />
    </main>
  );
};

export default App;
